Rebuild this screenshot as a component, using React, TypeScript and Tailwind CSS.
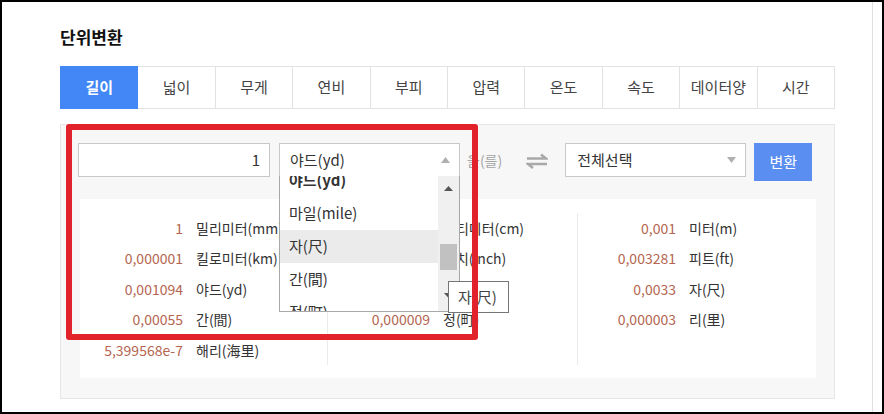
import React from 'react';

const cols: { w: string; vw: string; rows: [string, string][] }[] = [
  {
    w: 'w-[247px]',
    vw: 'w-[103px]',
    rows: [
      ['1', '밀리미터(mm)'],
      ['0,000001', '킬로미터(km)'],
      ['0,001094', '야드(yd)'],
      ['0,00055', '간(間)'],
      ['5,399568e-7', '해리(海里)'],
    ],
  },
  {
    w: 'w-[250px] border-l border-[#ebebeb]',
    vw: 'w-[102px]',
    rows: [
      ['0,1', '센티미터(cm)'],
      ['0,03937', '인치(inch)'],
      ['6,213712e-7', '마일(mile)'],
      ['0,000009', '정(町)'],
    ],
  },
  {
    w: 'flex-1 border-l border-[#ebebeb]',
    vw: 'w-[98px]',
    rows: [
      ['0,001', '미터(m)'],
      ['0,003281', '피트(ft)'],
      ['0,0033', '자(尺)'],
      ['0,000003', '리(里)'],
    ],
  },
];

const tabs = ['길이', '넓이', '무게', '연비', '부피', '압력', '온도', '속도', '데이터양', '시간'];

// 드롭다운 목록 (스크롤된 상태)
const options = ['야드(yd)', '마일(mile)', '자(尺)', '간(間)', '정(町)'];

const App: React.FC = () => {
  return (
    <div className="relative w-[884px] h-[414px] overflow-hidden border-2 border-black bg-white flex font-['Noto_Sans_CJK_KR',sans-serif] text-[#333]">
      <div className="w-[870px] pl-[58px] pt-[24px]">
        <h1 className="text-[17px] leading-[22px] font-bold text-[#111]">단위변환</h1>

        <div className="mt-[18px] w-[775px] grid grid-cols-10 h-[43px] border-l border-[#e2e2e2]">
          {tabs.map((t, i) =>
            i === 0 ? (
              <div key={t} className="flex items-center justify-center bg-[#4287f5] text-white font-bold text-[15px] -ml-px">
                {t}
              </div>
            ) : (
              <div key={t} className="flex items-center justify-center border-y border-r border-[#e2e2e2] text-[15px] text-[#444]">
                {t}
              </div>
            )
          )}
        </div>

        <div className="mt-[15px] w-[775px] h-[275px] border border-[#e6e6e6] bg-[#f7f7f7] pl-[17px] pt-[18px]">
          <div className="flex items-start h-[38px]">
            <div className="w-[192px] h-[34px] border border-[#c8c8c8] bg-white flex items-center justify-end pr-[9px] text-[15px]">
              1
            </div>
            <div className="ml-[9px] w-[181px] h-[34px] border border-[#c8c8c8] bg-white flex items-center justify-between pl-[10px] pr-[9px] text-[15px]">
              <span>야드(yd)</span>
              <svg width="9" height="6" viewBox="0 0 9 6">
                <path d="M0 6 L4.5 0 L9 6 Z" fill="#b0b0b0" />
              </svg>
            </div>
            <span className="ml-[7px] h-[34px] flex items-center text-[14px] text-[#a5a5a5]">을(를)</span>
            <svg className="ml-[24px] mt-[10px]" width="22" height="16" viewBox="0 0 22 16">
              <path d="M1 5.5 H20 L15 1.5" stroke="#a9a9a9" strokeWidth="2.6" fill="none" />
              <path d="M21 11 H2 L7 15" stroke="#a9a9a9" strokeWidth="2.6" fill="none" />
            </svg>
            <div className="ml-[17px] w-[181px] h-[34px] border border-[#c8c8c8] bg-white flex items-center justify-between pl-[11px] pr-[9px] text-[15px]">
              <span>전체선택</span>
              <svg width="9" height="6" viewBox="0 0 9 6">
                <path d="M0 0 L4.5 6 L9 0 Z" fill="#b0b0b0" />
              </svg>
            </div>
            <button className="ml-[8px] w-[58px] h-[38px] bg-[#5a8ef0] text-white text-[15px]">변환</button>
          </div>

          <div className="mt-[18px] ml-[2px] w-[736px] h-[179px] bg-white pt-[14px]">
            <div className="flex h-[152px]">
              {cols.map((c, ci) => (
                <div key={ci} className={c.w}>
                  {c.rows.map(([v, n]) => (
                    <div key={n} className="flex items-center h-[30.5px] text-[14px]">
                      <span className={`${c.vw} text-right text-[#b5654f]`}>{v}</span>
                      <span className="ml-[13px]">{n}</span>
                    </div>
                  ))}
                </div>
              ))}
            </div>
          </div>
        </div>
      </div>
      <div className="flex-1 border-l border-[#e0e0e0]" />

      {/* 열린 드롭다운 */}
      <div className="absolute left-[277px] top-[174px] w-[181px] h-[136px] border border-[#a8a8a8] border-t-0 bg-white flex overflow-hidden">
        <div className="flex-1 overflow-hidden">
          <div className="-mt-[12px]">
            {options.map((o, i) => (
              <div
                key={o}
                className={`h-[33px] flex items-center pl-[9px] text-[15px] ${i === 0 ? 'font-bold' : ''} ${i === 2 ? 'bg-[#ebebeb]' : ''}`}
              >
                {o}
              </div>
            ))}
          </div>
        </div>
        <div className="w-[21px] bg-[#f0f0f0] flex flex-col items-center pt-[10px]">
          <svg width="9" height="5" viewBox="0 0 9 5">
            <path d="M0 5 L4.5 0 L9 5 Z" fill="#555" />
          </svg>
          <div className="mt-[53px] w-[17px] h-[26px] bg-[#c1c1c1]" />
          <svg className="mt-[23px]" width="9" height="5" viewBox="0 0 9 5">
            <path d="M0 0 L4.5 5 L9 0 Z" fill="#555" />
          </svg>
        </div>
      </div>

      {/* 툴팁 */}
      <div className="absolute left-[446px] top-[279px] w-[61px] h-[32px] border border-[#767676] bg-white flex items-center pl-[9px] text-[15px] text-[#444]">
        자(尺)
      </div>

      {/* 빨간 강조 박스 */}
      <div className="absolute left-[64px] top-[122px] w-[412px] h-[216px] border-[6px] border-[#e2222b] rounded-[3px]" />
    </div>
  );
};

export default App;
